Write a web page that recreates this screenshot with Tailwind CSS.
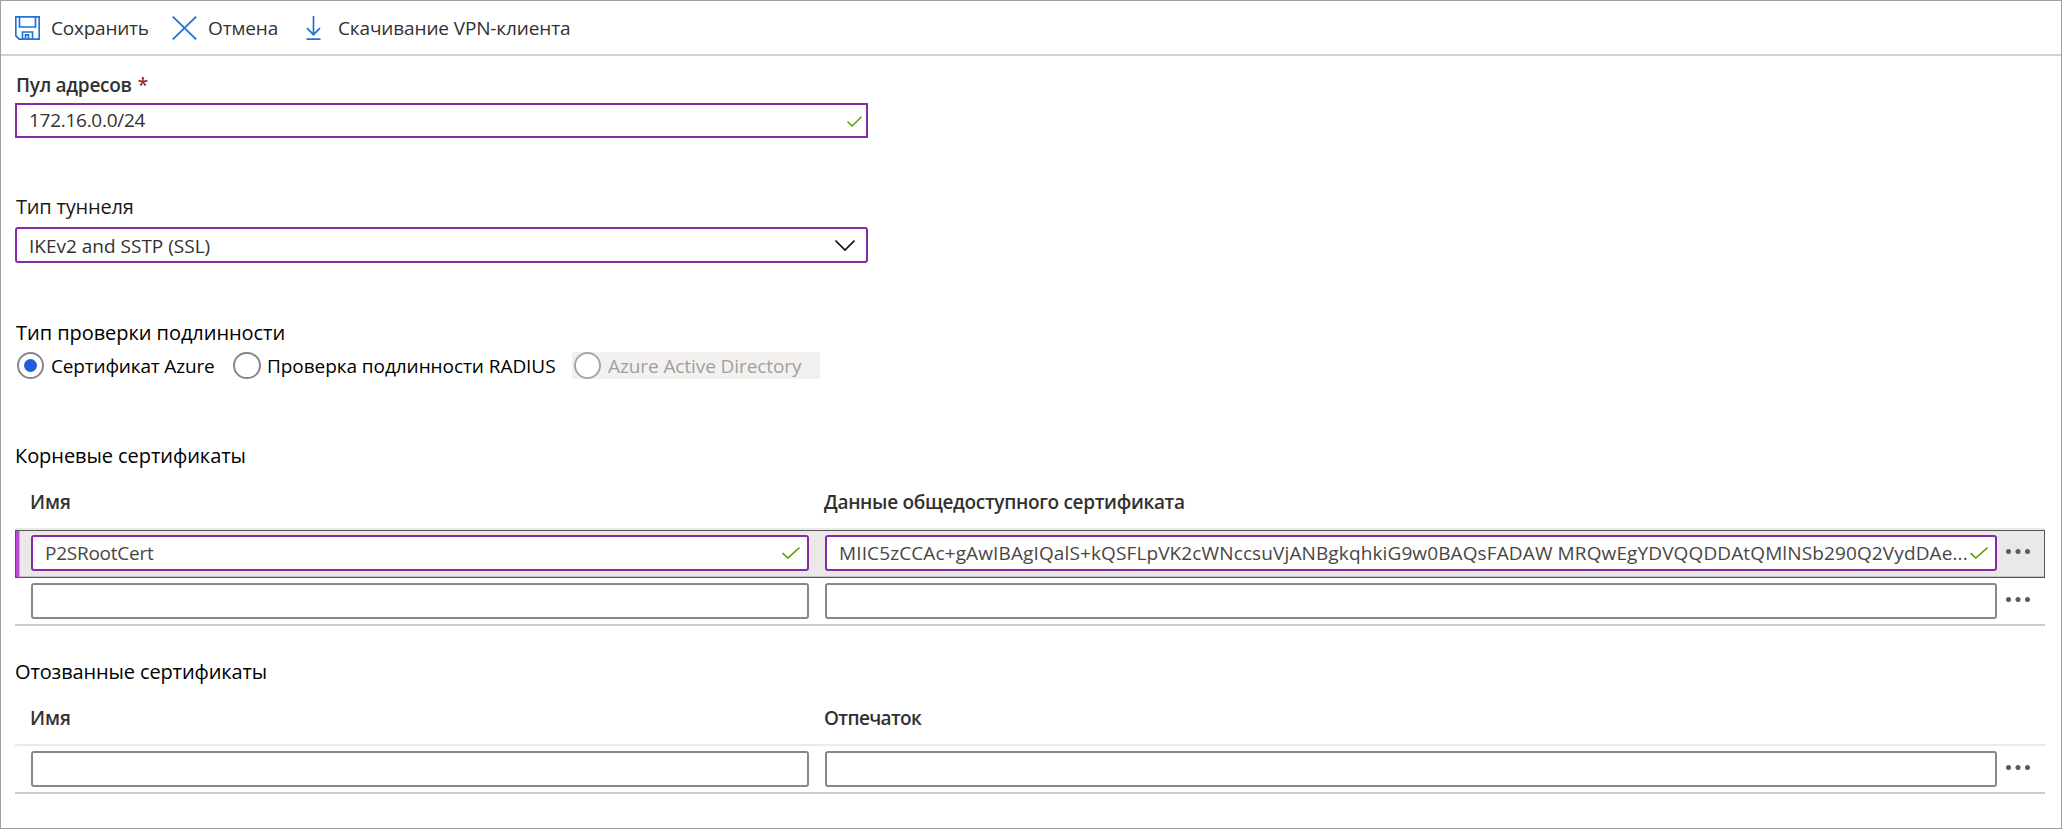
<!DOCTYPE html>
<html lang="ru">
<head>
<meta charset="utf-8">
<title>Конфигурация "точка — сеть"</title>
<script src="https://cdn.jsdelivr.net/npm/@tailwindcss/browser@4"></script>
</head>
<body class="bg-white">
<div class="flex h-[829px] w-[2062px] flex-col overflow-hidden border border-[#a0a0a0] bg-white font-['Open_Sans','Noto_Sans',sans-serif] text-[19px] leading-7 whitespace-nowrap text-[#323130]">

  <!-- Toolbar -->
  <header class="flex h-[55px] shrink-0 items-center border-b-2 border-[#d2d2d2] pl-[14px]">
    <button class="flex items-center">
      <svg class="h-6 w-[25px]" viewBox="0 0 25 24" fill="none" stroke="#1f74d6" stroke-width="1.7">
        <path d="M.8.8h23.4v22.4H4.2L.8 19.8z"/>
        <path d="M4.5 1v10h16V1"/>
        <path d="M7.5 23v-7h10v7M10.5 23v-4.2h3V23"/>
      </svg>
      <span class="ml-[11px] w-[98px] text-left tracking-[-0.22px]">Сохранить</span>
    </button>
    <button class="ml-[23px] flex items-center">
      <svg class="h-6 w-[25px]" viewBox="0 0 25 24" fill="none" stroke="#1f74d6" stroke-width="1.8">
        <path d="M.8.6l23.4 22.8M24.2.6L.8 23.4"/>
      </svg>
      <span class="ml-[11px] w-[70px] text-left tracking-[-0.12px]">Отмена</span>
    </button>
    <button class="ml-[28px] flex items-center">
      <svg class="h-6 w-[15px]" viewBox="0 0 15 24" fill="none" stroke="#1f74d6" stroke-width="1.7">
        <path d="M7.5 0v18.6M1 12.2l6.5 6.5 6.5-6.5M.5 23.2h14"/>
      </svg>
      <span class="ml-[17px] tracking-[-0.13px]">Скачивание VPN-клиента</span>
    </button>
  </header>

  <main class="flex w-[2044px] flex-col pt-[15px] pl-[14px]">
    <!-- Address pool -->
    <label class="flex gap-[6px] pl-px font-semibold tracking-[-0.27px]"><span>Пул адресов</span><span class="text-[#a4262c]">*</span></label>
    <div class="mt-1 flex h-[35px] w-[853px] items-center justify-between border-2 border-[#862ba8] pr-[4px] pl-[12px]">
      <span class="pb-0.5 tracking-[-0.28px]">172.16.0.0/24</span>
      <svg class="mt-0.5 h-[11px] w-[15px]" viewBox="0 0 15 11" fill="none" stroke="#57a300" stroke-width="1.4"><path d="M.5 5.5l4.6 4.6L14.5.7"/></svg>
    </div>

    <!-- Tunnel type -->
    <label class="mt-[55px] pl-px text-xl leading-7 tracking-[-0.2px] text-[#1b1a19]">Тип туннеля</label>
    <div class="mt-[6px] flex h-9 w-[853px] items-center justify-between rounded-[3px] border-2 border-[#862ba8] pr-[11px] pl-[12px]">
      <span class="pt-px">IKEv2 and SSTP (SSL)</span>
      <svg class="h-[11px] w-5" viewBox="0 0 20 11" fill="none" stroke="#111" stroke-width="1.6"><path d="M.5.6l9.5 9.5L19.5.6"/></svg>
    </div>

    <!-- Authentication type -->
    <div class="mt-[56px] pl-px text-xl leading-7 tracking-[-0.05px] text-black">Тип проверки подлинности</div>
    <div class="mt-[5px] flex h-[27px] items-center text-black">
      <div class="flex w-[216px] items-center pl-[2px]">
        <span class="flex size-[27px] items-center justify-center rounded-full border-2 border-[#868686]"><span class="size-[13px] rounded-full bg-[#215de0]"></span></span>
        <span class="ml-[7px] tracking-[-0.17px]">Сертификат Azure</span>
      </div>
      <div class="flex w-[341px] items-center pl-[2px]">
        <span class="h-[27px] w-7 rounded-full border-2 border-[#868686]"></span>
        <span class="ml-[6px] tracking-[-0.06px]">Проверка подлинности RADIUS</span>
      </div>
      <div class="flex h-[27px] w-[248px] items-center bg-[#f3f1f0] pl-[2px] text-[#a19f9d]">
        <span class="size-[27px] rounded-full border-2 border-[#a6a6a6] bg-white"></span>
        <span class="ml-[7px] tracking-[-0.09px]">Azure Active Directory</span>
      </div>
    </div>

    <!-- Root certificates -->
    <h2 class="mt-[63px] text-xl leading-7 tracking-[-0.06px] text-black">Корневые сертификаты</h2>
    <section class="mt-[18px] w-[2030px]">
      <div class="flex pb-3 font-semibold">
        <span class="w-[809px] pl-[15px]">Имя</span>
        <span class="tracking-[-0.32px]">Данные общедоступного сертификата</span>
      </div>
      <div class="h-0.5 bg-[#eaeaea]"></div>
      <div class="flex h-12 border border-[#555] bg-[#ebe9e8]">
        <div class="w-[3px] bg-[#b94ad3]"></div>
        <div class="w-px bg-[#dd9bec]"></div>
        <div class="flex flex-1 items-center border-b border-[#c4c4c4] pb-px pl-[11px]">
          <div class="flex h-9 w-[778px] items-center justify-between rounded-[3px] border-2 border-[#862ba8] bg-white pr-[7px] pl-[12px] text-[#484644]">
            <span class="tracking-[-0.25px]">P2SRootCert</span>
            <svg class="h-3 w-[18px]" viewBox="0 0 18 12" fill="none" stroke="#57a300" stroke-width="1.6"><path d="M.5 6l5.3 5L17.5.6"/></svg>
          </div>
          <div class="ml-4 flex h-9 w-[1172px] items-center justify-between rounded-[3px] border-2 border-[#862ba8] bg-white pr-[7px] pl-[12px] text-[#484644]">
            <span class="tracking-[0.12px]">MIIC5zCCAc+gAwIBAgIQalS+kQSFLpVK2cWNccsuVjANBgkqhkiG9w0BAQsFADAW MRQwEgYDVQQDDAtQMlNSb290Q2VydDAe...</span>
            <svg class="h-3 w-[18px] shrink-0" viewBox="0 0 18 12" fill="none" stroke="#57a300" stroke-width="1.6"><path d="M.5 6l5.3 5L17.5.6"/></svg>
          </div>
          <svg class="mb-[3px] ml-[9px] h-[5px] w-6" viewBox="0 0 24 5" fill="#5d5b59"><circle cx="2.5" cy="2.5" r="2.5"/><circle cx="12" cy="2.5" r="2.5"/><circle cx="21.5" cy="2.5" r="2.5"/></svg>
        </div>
      </div>
      <div class="flex h-12 items-center border-b-2 border-[#ccc] pl-4">
        <div class="h-9 w-[778px] rounded-[3px] border-2 border-[#888]"></div>
        <div class="ml-4 h-9 w-[1172px] rounded-[3px] border-2 border-[#888]"></div>
        <svg class="mb-[3px] ml-[9px] h-[5px] w-6" viewBox="0 0 24 5" fill="#5d5b59"><circle cx="2.5" cy="2.5" r="2.5"/><circle cx="12" cy="2.5" r="2.5"/><circle cx="21.5" cy="2.5" r="2.5"/></svg>
      </div>
    </section>

    <!-- Revoked certificates -->
    <h2 class="mt-[32px] text-xl leading-7 tracking-[-0.13px] text-black">Отозванные сертификаты</h2>
    <section class="mt-[18px] w-[2030px]">
      <div class="flex pb-3 font-semibold">
        <span class="w-[809px] pl-[15px]">Имя</span>
        <span class="tracking-[-0.63px]">Отпечаток</span>
      </div>
      <div class="h-0.5 bg-[#eaeaea]"></div>
      <div class="flex h-12 items-center border-b-2 border-[#ccc] pl-4">
        <div class="h-9 w-[778px] rounded-[3px] border-2 border-[#888]"></div>
        <div class="ml-4 h-9 w-[1172px] rounded-[3px] border-2 border-[#888]"></div>
        <svg class="mb-[3px] ml-[9px] h-[5px] w-6" viewBox="0 0 24 5" fill="#5d5b59"><circle cx="2.5" cy="2.5" r="2.5"/><circle cx="12" cy="2.5" r="2.5"/><circle cx="21.5" cy="2.5" r="2.5"/></svg>
      </div>
    </section>
  </main>
</div>
</body>
</html>
